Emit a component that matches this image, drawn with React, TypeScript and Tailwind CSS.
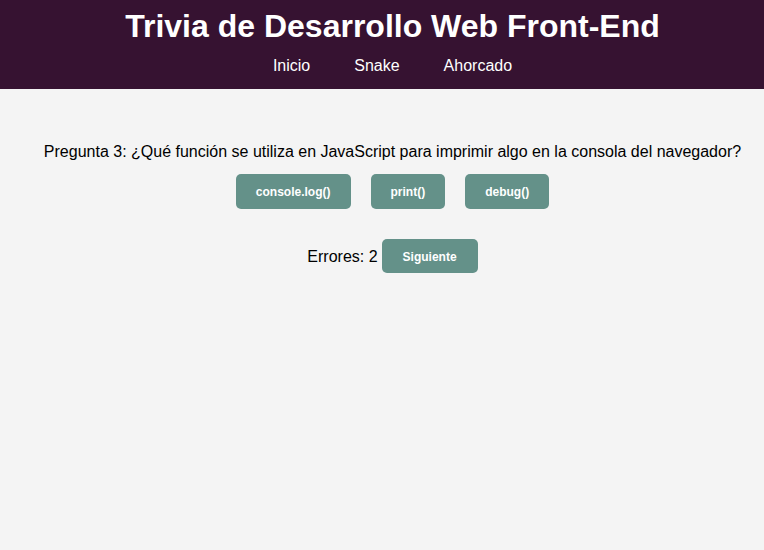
export default function App() {
  const opciones = ["console.log()", "print()", "debug()"];

  return (
    <div className="min-h-[550px] bg-[#f4f4f4] font-['Liberation_Sans',Arial,sans-serif] text-black">
      <header className="h-[89px] bg-[#361231] pl-[21px] pt-[8px] text-white">
        <h1 className="text-center text-[32px] font-bold leading-[37px]">
          Trivia de Desarrollo Web Front-End
        </h1>
        <nav className="mt-[12px] flex justify-center gap-[44px] text-[16px] leading-[18px]">
          <a href="#">Inicio</a>
          <a href="#">Snake</a>
          <a href="#">Ahorcado</a>
        </nav>
      </header>

      <main className="pl-[21px] pt-[53px]">
        <p className="text-center text-[16px] leading-[19px]">
          Pregunta 3: ¿Qué función se utiliza en JavaScript para imprimir algo en la consola del navegador?
        </p>
        <div className="mt-[13px] flex justify-center gap-[20px]">
          {opciones.map((op) => (
            <button
              key={op}
              className="h-[35px] rounded-[5px] bg-[#649189] px-[20px] text-[12px] font-bold text-white"
            >
              {op}
            </button>
          ))}
        </div>
        <div className="mt-[30px] flex items-center justify-center gap-[4px]">
          <span className="text-[16px] leading-[19px]">Errores: 2</span>
          <button className="h-[34px] rounded-[5px] bg-[#649189] px-[21px] pt-[1px] text-[12px] font-bold text-white">
            Siguiente
          </button>
        </div>
      </main>
    </div>
  );
}
